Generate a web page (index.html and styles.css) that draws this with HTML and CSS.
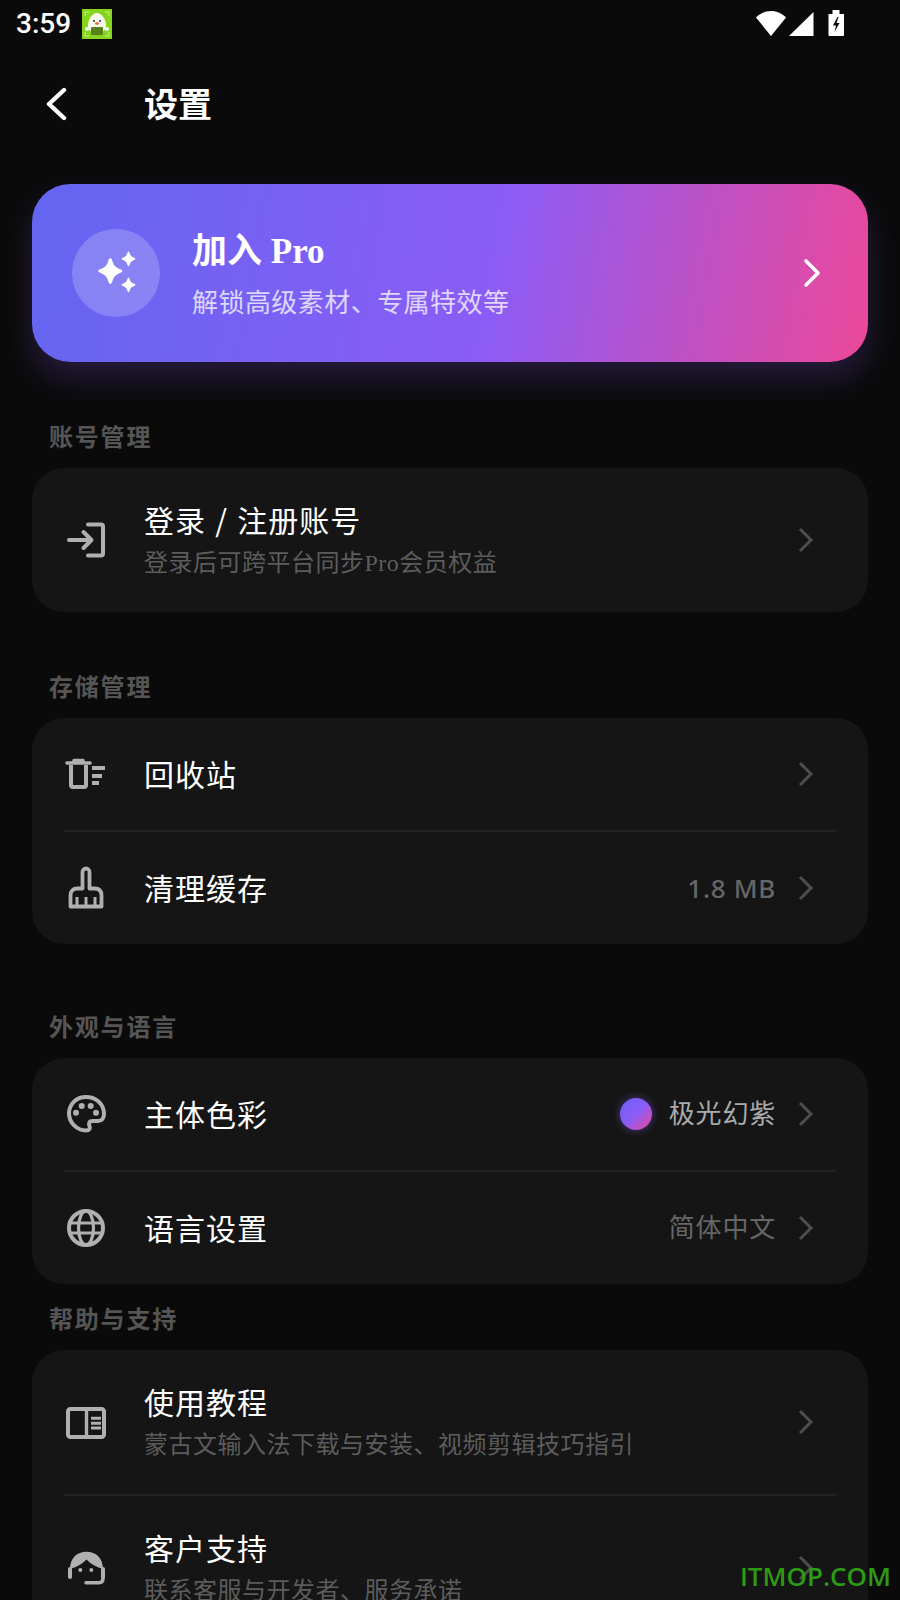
FILE: index.html
```html
<!DOCTYPE html>
<html lang="zh-CN">
<head>
<meta charset="utf-8">
<title>设置</title>
<link rel="stylesheet" href="styles.css">
</head>
<body>
<div class="screen">
  <div class="status">
    <span class="time">3:59</span>
    <svg class="appicon" width="30" height="30" viewBox="0 0 30 30">
      <rect width="30" height="30" fill="#86d41e"/>
      <path d="M3 7V3h4M23 3h4v4M3 23v4h4M27 23v4h-4" fill="none" stroke="#c8ef8c" stroke-width="1"/>
      <path d="M15 4c5 0 9 7 9 12 0 4-2 8-9 8s-9-4-9-8c0-5 4-12 9-12z" fill="#f6f8ec"/>
      <circle cx="5" cy="20" r="2" fill="#f6f8ec"/><circle cx="25" cy="20" r="2" fill="#f6f8ec"/>
      <rect x="9" y="18" width="12" height="8" rx="1" fill="#55801c"/>
      <circle cx="12" cy="12" r="1" fill="#333"/><circle cx="18" cy="12" r="1" fill="#333"/>
      <ellipse cx="15" cy="14.5" rx="2" ry="1.3" fill="#ee5a44"/>
    </svg>
    <span class="status-space"></span>
    <svg class="status-icons" width="90" height="27" viewBox="0 0 90 27">
      <path d="M0 7.500C4 3.500 9 1 15 1s11 2.500 15 6.500L15 26z" fill="#fff"/>
      <path d="M33 26 57.500 2v24z" fill="#fff"/>
      <path d="M72.500 4h4V0h7v4h4.500v21q0 1-1 1H73.500q-1 0-1-1z" fill="#fff"/>
      <path d="M81.500 7l-4.500 8.500h3l-1.500 6.500 5-9h-3l2-6z" fill="#0a0a0a"/>
    </svg>
  </div>

  <header class="topbar">
    <svg class="back" width="24" height="34" viewBox="0 0 24 34"><path d="M19 3 4 17l15 14" fill="none" stroke="#fff" stroke-width="4.400" stroke-linecap="round" stroke-linejoin="round"/></svg>
    <h1 class="page-title">设置</h1>
  </header>

  <section class="pro">
    <div class="pro-badge">
      <svg width="50" height="50" viewBox="0 0 44 44" fill="#fff">
        <path d="M17 9c1 0 1.500 1 2 3 1 3 2.500 5 7.500 7 1.500.6 1.500 2 0 2.600-5 2-6.500 4-7.500 7-.5 2-1 3-2 3s-1.500-1-2-3c-1-3-2.500-5-7.500-7-1.500-.6-1.500-2 0-2.600 5-2 6.500-4 7.500-7 .5-2 1-3 2-3z"/>
        <path d="M33 3c.6 0 .9 1 1.200 2 .5 1.600 1.300 2.500 3.300 3.300 1 .4 1.500.5 1.500 1.200s-.5.800-1.500 1.200c-2 .8-2.800 1.700-3.300 3.300-.3 1-.6 2-1.200 2s-.9-1-1.200-2c-.5-1.600-1.300-2.500-3.300-3.300-1-.4-1.500-.5-1.500-1.200s.5-.8 1.500-1.200c2-.8 2.800-1.700 3.300-3.300.3-1 .6-2 1.200-2z"/>
        <path d="M33 26c.6 0 .9 1 1.200 2 .5 1.600 1.300 2.500 3.300 3.300 1 .4 1.500.5 1.500 1.200s-.5.800-1.500 1.200c-2 .8-2.800 1.700-3.300 3.300-.3 1-.6 2-1.200 2s-.9-1-1.200-2c-.5-1.600-1.300-2.500-3.300-3.300-1-.4-1.500-.5-1.500-1.200s.5-.8 1.500-1.200c2-.8 2.800-1.700 3.300-3.300.3-1 .6-2 1.200-2z"/>
      </svg>
    </div>
    <div class="pro-text">
      <div class="pro-title">加入 Pro</div>
      <div class="pro-sub">解锁高级素材、专属特效等</div>
    </div>
    <svg class="pro-chevron" width="20" height="30" viewBox="0 0 20 30"><path d="M4 3l12 12L4 27" fill="none" stroke="#fff" stroke-width="3.600" stroke-linecap="round" stroke-linejoin="round"/></svg>
  </section>

  <h2 class="label label-account">账号管理</h2>
  <section class="card">
    <div class="row row-tall">
      <svg class="icon" width="44" height="44" viewBox="0 0 44 44"><path d="M24 6.500h13a2 2 0 0 1 2 2v27a2 2 0 0 1-2 2H24M5 22h22M19.500 14l8 8-8 8" fill="none" stroke="#b0b0b0" stroke-width="4" stroke-linecap="round" stroke-linejoin="round"/></svg>
      <div class="row-text">
        <div class="row-title row-title-spaced">登录 / 注册账号</div>
        <div class="row-sub">登录后可跨平台同步Pro会员权益</div>
      </div>
      <svg class="chevron" width="16" height="26" viewBox="0 0 16 26"><path d="M2 2l11 11L2 24" fill="none" stroke="#4d4d4d" stroke-width="3"/></svg>
    </div>
  </section>

  <h2 class="label label-storage">存储管理</h2>
  <section class="card">
    <div class="row row-short">
      <svg class="icon" width="44" height="44" viewBox="0 0 44 44"><path d="M3 11h23M10 8.500h9" fill="none" stroke="#b0b0b0" stroke-width="3.600" stroke-linecap="round"/><path d="M7 13v20q0 2 2 2h11q2 0 2-2V13" fill="none" stroke="#b0b0b0" stroke-width="4"/><path d="M28 16h13M28 24h10M28 31h7" stroke="#b0b0b0" stroke-width="3.800" fill="none"/></svg>
      <div class="row-text"><div class="row-title">回收站</div></div>
      <svg class="chevron" width="16" height="26" viewBox="0 0 16 26"><path d="M2 2l11 11L2 24" fill="none" stroke="#4d4d4d" stroke-width="3"/></svg>
    </div>
    <div class="divider"></div>
    <div class="row row-short">
      <svg class="icon" width="44" height="44" viewBox="0 0 44 44"><path d="M18.500 22.500V6a3.500 3.500 0 0 1 7 0v16.500h5q7 0 7 7V40.500H6.500V29.500q0-7 7-7z" fill="none" stroke="#b0b0b0" stroke-width="3.800" stroke-linejoin="round"/><path d="M13 31v9M22 31v9M31 31v9" fill="none" stroke="#b0b0b0" stroke-width="3"/></svg>
      <div class="row-text"><div class="row-title">清理缓存</div></div>
      <span class="value value-size">1.8 MB</span>
      <svg class="chevron" width="16" height="26" viewBox="0 0 16 26"><path d="M2 2l11 11L2 24" fill="none" stroke="#4d4d4d" stroke-width="3"/></svg>
    </div>
  </section>

  <h2 class="label label-look">外观与语言</h2>
  <section class="card">
    <div class="row row-short">
      <svg class="icon" width="44" height="44" viewBox="0 0 44 44"><path d="M22 5C12 5 5 12.500 5 21.500S13 38.500 22 38.500c3.500 0 4.500-2 3.500-4.500-1-3-.5-5 3.500-5h5c4 0 6-3 6-7C40 12 32 5 22 5z" fill="none" stroke="#b0b0b0" stroke-width="4"/><circle cx="12" cy="20.700" r="3" fill="#b0b0b0"/><circle cx="17.700" cy="14" r="3" fill="#b0b0b0"/><circle cx="26.700" cy="14" r="3" fill="#b0b0b0"/><circle cx="32" cy="20.700" r="3" fill="#b0b0b0"/></svg>
      <div class="row-text"><div class="row-title">主体色彩</div></div>
      <span class="theme-dot"></span>
      <span class="value value-theme">极光幻紫</span>
      <svg class="chevron" width="16" height="26" viewBox="0 0 16 26"><path d="M2 2l11 11L2 24" fill="none" stroke="#4d4d4d" stroke-width="3"/></svg>
    </div>
    <div class="divider"></div>
    <div class="row row-short">
      <svg class="icon" width="44" height="44" viewBox="0 0 44 44"><g fill="none" stroke="#b0b0b0"><circle cx="22" cy="22" r="17" stroke-width="4"/><path d="M5 17h34M5 27h34" stroke-width="3.200"/><ellipse cx="22" cy="22" rx="7.500" ry="17" stroke-width="3.200"/></g></svg>
      <div class="row-text"><div class="row-title">语言设置</div></div>
      <span class="value">简体中文</span>
      <svg class="chevron" width="16" height="26" viewBox="0 0 16 26"><path d="M2 2l11 11L2 24" fill="none" stroke="#4d4d4d" stroke-width="3"/></svg>
    </div>
  </section>

  <h2 class="label label-help">帮助与支持</h2>
  <section class="card">
    <div class="row row-help">
      <svg class="icon" width="44" height="44" viewBox="0 0 44 44"><rect x="4" y="9" width="36" height="28" rx="2.500" fill="none" stroke="#b0b0b0" stroke-width="4"/><path d="M22.500 9v28" stroke="#b0b0b0" stroke-width="3.400"/><path d="M27 18.300h10M27 23.300h10M27 28h10" stroke="#b0b0b0" stroke-width="3"/></svg>
      <div class="row-text">
        <div class="row-title">使用教程</div>
        <div class="row-sub">蒙古文输入法下载与安装、视频剪辑技巧指引</div>
      </div>
      <svg class="chevron" width="16" height="26" viewBox="0 0 16 26"><path d="M2 2l11 11L2 24" fill="none" stroke="#4d4d4d" stroke-width="3"/></svg>
    </div>
    <div class="divider"></div>
    <div class="row row-help">
      <svg class="icon" width="44" height="44" viewBox="0 0 44 44"><path d="M6 23C6 12 13 5.700 22.500 5.700S39 12 39 23C33 21.500 27.500 18.500 22.500 13.500 17.500 18.500 12 21.500 6 23z" fill="#b0b0b0"/><rect x="4" y="21" width="4" height="12" rx="2" fill="#b0b0b0"/><rect x="37" y="21" width="4" height="12" rx="2" fill="#b0b0b0"/><circle cx="16.300" cy="24" r="2" fill="#b0b0b0"/><circle cx="27.300" cy="24" r="2" fill="#b0b0b0"/><path d="M39 32q0 4.700-4 4.700H22" fill="none" stroke="#b0b0b0" stroke-width="3.600" stroke-linecap="round"/></svg>
      <div class="row-text">
        <div class="row-title">客户支持</div>
        <div class="row-sub">联系客服与开发者、服务承诺</div>
      </div>
      <svg class="chevron" width="16" height="26" viewBox="0 0 16 26"><path d="M2 2l11 11L2 24" fill="none" stroke="#4d4d4d" stroke-width="3"/></svg>
    </div>
  </section>

  <div class="watermark">ITMOP.COM</div>
</div>
</body>
</html>
```

FILE: styles.css
```css
* { box-sizing: border-box; }
html, body { margin: 0; padding: 0; background: #0a0a0a; }
.screen {
  position: relative;
  width: 900px;
  height: 1600px;
  overflow: hidden;
  padding: 0 32px;
  background: #0a0a0a;
  color: #fff;
  font-family: "Noto Sans CJK SC", "Noto Sans", sans-serif;
}
.status { display: flex; align-items: center; height: 48px; margin: 0 -16px; }
.time { font-family: Roboto, sans-serif; font-size: 28px; font-weight: 500; line-height: 48px; width: 66px; color: #fff; }
.appicon { flex: none; }
.status-space { flex: 1; }
.status-icons { flex: none; margin-right: 38px; margin-top: -1px; }
.topbar { display: flex; align-items: center; height: 116px; }
.back { flex: none; margin: -4px 0 0 13px; }
.page-title { margin: -6px 0 0 75px; font-size: 34px; font-weight: 700; line-height: 44px; }
.pro {
  display: flex;
  align-items: center;
  height: 178px;
  margin-top: 20px;
  padding: 0 46px 0 40px;
  border-radius: 38px;
  background: linear-gradient(100deg, #6366f1 0%, #8b5cf6 55%, #ec4899 100%);
  box-shadow: 0 16px 32px rgba(139, 92, 246, 0.22);
}
.pro-badge {
  flex: none;
  display: flex;
  align-items: center;
  justify-content: center;
  width: 88px;
  height: 88px;
  border-radius: 50%;
  background: rgba(255, 255, 255, 0.2);
}
.pro-text { flex: 1; margin-left: 32px; padding-top: 5px; }
.pro-title { font-family: "Liberation Serif", "Noto Sans CJK SC", serif; font-size: 35px; font-weight: 700; line-height: 46px; }
.pro-sub { font-family: "Liberation Serif", "Noto Sans CJK SC", serif; font-size: 26px; letter-spacing: 0.450px; line-height: 38px; margin-top: 10px; color: rgba(255, 255, 255, 0.75); }
.pro-chevron { flex: none; }
.label {
  margin: 0 0 15px 17px;
  font-size: 24px;
  font-weight: 700;
  line-height: 34px;
  letter-spacing: 1.800px;
  color: #555;
}
.label-account { margin-top: 57px; }
.label-storage { margin-top: 57px; }
.label-look { margin-top: 65px; }
.label-help { margin-top: 17px; }
.card { border-radius: 32px; background: #151515; }
.row { display: flex; align-items: center; padding: 0 32px; }
.row-tall { height: 144px; }
.row-short { height: 112px; }
.row-help { height: 144px; }
.row-tall .row-text, .row-help .row-text { margin-bottom: 2px; }
.row-short .row-text { margin-bottom: 3px; }
.icon { flex: none; }
.row-text { flex: 1; min-width: 0; margin-left: 36px; }
.row-title { font-size: 30px; line-height: 40px; letter-spacing: 1px; color: #fff; }
.row-title-spaced { word-spacing: 1.500px; }
.row-sub { font-family: "Liberation Serif", "Noto Sans CJK SC", serif; font-size: 24px; line-height: 34px; letter-spacing: 0.500px; margin-top: 7px; color: #5c5c5c; }
.value { font-size: 26px; line-height: 36px; letter-spacing: 0.800px; color: #666; margin: 0 22px 4px 0; }
.value-size { font-family: "Noto Sans", sans-serif; font-weight: 500; letter-spacing: 0.700px; margin-bottom: 0; }
.value-theme { color: #aaa; }
.theme-dot {
  flex: none;
  width: 32px;
  height: 32px;
  margin-right: 17px;
  border-radius: 50%;
  background: linear-gradient(135deg, #6d5ff6 0%, #8b5cf6 50%, #ec4899 100%);
  box-shadow: 0 0 8px rgba(139, 92, 246, 0.5);
}
.chevron { flex: none; margin-right: 22px; }
.divider { height: 2px; margin: 0 32px; background: #222; }
.watermark {
  position: absolute;
  right: 9px;
  bottom: 9px;
  font-family: "Open Sans", sans-serif;
  font-size: 26px;
  font-weight: 600;
  line-height: 30px;
  color: #2d9a14;
}
```
